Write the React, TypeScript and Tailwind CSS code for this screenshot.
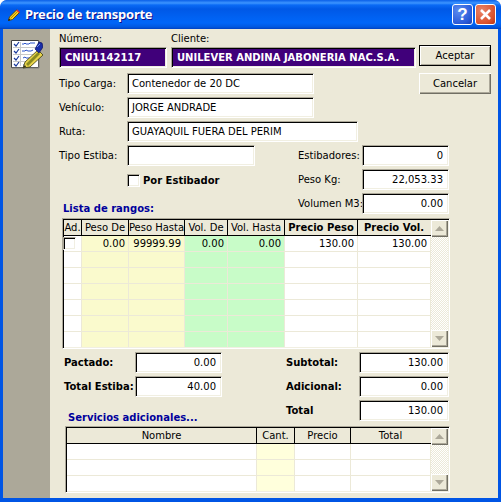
import { ReactNode } from "react";

const sunken = "border border-t-[#aca899] border-l-[#aca899] border-r-white border-b-white shadow-[inset_1px_1px_0_#000,inset_-1px_-1px_0_#f1efe2]";
const raised = "bg-[#ece9d8] shadow-[inset_1px_1px_0_#fff,inset_-1px_-1px_0_#716f64,inset_-2px_-2px_0_#aca899]";

interface Col { title: string; width: string; bg: string; bold?: boolean }

const RANGE_COLS: Col[] = [
  { title: "Ad.", width: "w-[18px]", bg: "bg-white" },
  { title: "Peso De", width: "w-[47px]", bg: "bg-[#fafacd]" },
  { title: "Peso Hasta", width: "w-[56px]", bg: "bg-[#fafacd]" },
  { title: "Vol. De", width: "w-[43px]", bg: "bg-[#c8fcc8]" },
  { title: "Vol. Hasta", width: "w-[57px]", bg: "bg-[#c8fcc8]" },
  { title: "Precio Peso", width: "w-[73px]", bg: "bg-white", bold: true },
  { title: "Precio Vol.", width: "w-[73px]", bg: "bg-white", bold: true },
];

const SERVICE_COLS: Col[] = [
  { title: "Nombre", width: "w-[190px]", bg: "bg-white" },
  { title: "Cant.", width: "w-[38px]", bg: "bg-[#ffffdc]" },
  { title: "Precio", width: "w-[56px]", bg: "bg-white" },
  { title: "Total", width: "w-[80px]", bg: "bg-white" },
];

function Arrow({ down }: { down?: boolean }) {
  return (
    <svg width="9" height="5" viewBox="0 0 9 5">
      <path d={down ? "M0 0h9L4.5 5z" : "M4.5 0L9 5H0z"} fill="#aca899" />
    </svg>
  );
}

function ScrollBar() {
  return (
    <div className="flex flex-col w-[17px] h-full">
      <div className={`${raised} h-[17px] shrink-0 flex items-center justify-center`}><Arrow /></div>
      <div className="flex-1 bg-[repeating-conic-gradient(#ece9d8_0_25%,#fff_0_50%)] bg-[length:2px_2px]" />
      <div className={`${raised} h-[17px] shrink-0 flex items-center justify-center`}><Arrow down /></div>
    </div>
  );
}

function Check({ className = "" }: { className?: string }) {
  return <div className={`w-[13px] h-[13px] bg-white ${sunken} ${className}`} />;
}

function Input({ value = "", width, right }: { value?: string; width: string; right?: boolean }) {
  return (
    <div className={`${width} h-[21px] ${sunken} bg-white flex items-center whitespace-nowrap overflow-hidden ${right ? "justify-end pr-[5px]" : "pl-[4px]"}`}>
      {value}
    </div>
  );
}

function Field({ label, labelWidth, children, bold }: { label: string; labelWidth: string; children: ReactNode; bold?: boolean }) {
  return (
    <div className="flex items-center h-[21px]">
      <div className={`${labelWidth} shrink-0 whitespace-nowrap ${bold ? "font-bold" : ""}`}>{label}</div>
      {children}
    </div>
  );
}

function Grid({ cols, rows, className }: { cols: Col[]; rows: (ReactNode | string)[][]; className: string }) {
  return (
    <div className={`${sunken} p-[1px] flex ${className}`}>
      <div className="flex flex-col">
        <div className="flex h-[16px] bg-[#ece9d8] border-b border-black shrink-0">
          {cols.map((c, i) => (
            <div key={c.title} className={`${c.width} h-full flex items-center justify-center whitespace-nowrap overflow-hidden ${c.bold ? "font-bold" : ""} ${i < cols.length - 1 ? "border-r border-black" : "border-r border-[#ece9d8]"}`}>
              {c.title}
            </div>
          ))}
        </div>
        {rows.map((r, ri) => (
          <div key={ri} className={`flex ${ri === rows.length - 1 ? "h-[15px]" : "h-[16px] border-b border-[#ece9d8]"}`}>
            {cols.map((c, ci) => (
              <div key={c.title} className={`${c.width} ${c.bg} border-r border-[#ece9d8] h-full flex items-center justify-end pr-[3px] whitespace-nowrap`}>
                {r[ci]}
              </div>
            ))}
          </div>
        ))}
      </div>
      <ScrollBar />
    </div>
  );
}

function DocIcon() {
  return (
    <svg width="32" height="32" viewBox="0 0 32 32">
      <path d="M.5 2.5h27v27H.5z" fill="#fff" stroke="#404040" />
      <path d="M28 3v27H1" fill="none" stroke="#808080" />
      <path d="M2 9.500h24M2 16.500h24M2 23.500h16M9.500 4v24" stroke="#c8c8c8" fill="none" />
      <path d="M3 6l2 2 3-4M3 13l2 2 3-4M3 20l2 2 3-4M3 26l2 2 3-4" stroke="#1a3a9c" fill="none" strokeWidth="1.200" />
      <path d="M11 6h2l1-1 1 1h3l1-1h5M11 13h3l1-1 2 1h3l2-1M12 20l2-1 1 1h4M12 27h3" stroke="#2a52c8" fill="none" />
      <path d="M12 30l2-6 13-12 5 5-13 12z" fill="#e8d44a" stroke="#3a3a10" strokeWidth=".8" />
      <path d="M15 26l12-12 2 2-12 12z" fill="#8a8a20" />
      <path d="M24 11l4-7 3 1 1 4-4 6z" fill="#1a2ea8" stroke="#0a1060" strokeWidth=".7" />
      <path d="M26 9l3-3" stroke="#6f8cf0" fill="none" />
      <path d="M12 30l2-3 1 2z" fill="#202020" />
    </svg>
  );
}

function PencilIcon() {
  return (
    <svg width="12" height="12" viewBox="0 0 12 12" className="shrink-0">
      <path d="M.5 11.500l1-3.500L8.500 1l3 2.500-7 7z" fill="#f5d020" stroke="#5a4200" strokeWidth=".9" />
      <path d="M2.500 9.500L9 3" stroke="#c08a00" fill="none" />
      <path d="M8 1.500l3 2.500 .8-1L9.500.5z" fill="#e83030" />
      <path d="M.3 11.700l.6-2 1.400 1.400z" fill="#000" />
    </svg>
  );
}

export default function App() {
  const empty = ["", "", "", "", "", "", ""];
  const rangeRows: (ReactNode | string)[][] = [
    [<Check key="c" className="-ml-[1px] mr-[2px]" />, "0.00", "99999.99", "0.00", "0.00", "130.00", "130.00"],
    empty, empty, empty, empty, empty, empty,
  ];

  return (
    <div className="w-[501px] h-[502px] flex flex-col overflow-hidden font-['DejaVu_Sans',sans-serif] text-[10px] text-black bg-[#0055e5] rounded-t-[7px]">
      {/* Title bar */}
      <div className="h-[29px] shrink-0 flex items-center pl-[8px] pr-[5px] rounded-t-[7px] bg-[linear-gradient(#0a5fe8_0,#3d95ff_3px,#0a6af5_5px,#0058e6_9px,#0062f3_18px,#0066f8_23px,#0058e0_27px,#0040c0_29px)]">
        <PencilIcon />
        <span className="ml-[5px] font-['Noto_Sans',sans-serif] font-bold text-[13px] tracking-[-0.25px] text-white [text-shadow:1px_1px_#0f1089] whitespace-nowrap">Precio de transporte</span>
        <div className="ml-auto flex gap-[2px]">
          <div className="w-[21px] h-[21px] rounded-[3px] border border-white bg-[radial-gradient(circle_at_30%_30%,#5c8cf0,#2a5ad8_70%,#1c3fb0)] flex items-center justify-center font-['Liberation_Sans',sans-serif] font-bold text-[17px] text-white">?</div>
          <div className="w-[21px] h-[21px] rounded-[3px] border border-white bg-[radial-gradient(circle_at_30%_30%,#ea8468,#d9512c_70%,#b8330f)] flex items-center justify-center">
            <svg width="13" height="13" viewBox="0 0 13 13"><path d="M2 2l9 9M11 2l-9 9" stroke="#fff" strokeWidth="2.600" /></svg>
          </div>
        </div>
      </div>

      {/* Window body */}
      <div className="flex-1 flex mx-[3px] mb-[4px] min-h-0">
        <div className="w-[47px] shrink-0 bg-[#aca899] pl-[8px] pt-[9px]">
          <DocIcon />
        </div>
        <div className="flex-1 bg-[#ece9d8] min-w-0">
          {/* Top block */}
          <div className="flex pl-[9px] pt-[3px]">
            <div className="w-[357px]">
              <div className="flex gap-[4px]">
                <div>
                  <div className="h-[15px] leading-[13px]">Número:</div>
                  <div className={`w-[108px] h-[21px] ${sunken} bg-[#40007a] text-white font-bold flex items-center pl-[5px] whitespace-nowrap`}>CNIU1142117</div>
                </div>
                <div>
                  <div className="h-[15px] leading-[13px]">Cliente:</div>
                  <div className={`w-[245px] h-[21px] ${sunken} bg-[#40007a] text-white font-bold flex items-center pl-[5px] whitespace-nowrap`}>UNILEVER ANDINA JABONERIA NAC.S.A.</div>
                </div>
              </div>
              <div className="flex flex-col gap-[3px] mt-[5px]">
                <Field label="Tipo Carga:" labelWidth="w-[68px]"><Input width="w-[187px]" value="Contenedor de 20 DC" /></Field>
                <Field label="Vehículo:" labelWidth="w-[68px]"><Input width="w-[187px]" value="JORGE ANDRADE" /></Field>
                <Field label="Ruta:" labelWidth="w-[68px]"><Input width="w-[231px]" value="GUAYAQUIL FUERA DEL PERIM" /></Field>
              </div>
            </div>
            <div className="flex flex-col gap-[7px] pt-[13px] ml-[3px]">
              <div className="w-[72px] h-[21px] border border-black bg-[#ece9d8] shadow-[inset_1px_1px_0_#fff,inset_-1px_-1px_0_#aca899] flex items-center justify-center">Aceptar</div>
              <div className={`w-[72px] h-[21px] ${raised} flex items-center justify-center`}>Cancelar</div>
            </div>
          </div>

          {/* Stowage block */}
          <div className="flex pl-[9px] mt-[3px]">
            <div className="w-[239px]">
              <Field label="Tipo Estiba:" labelWidth="w-[68px]"><Input width="w-[128px]" /></Field>
              <div className="flex items-center gap-[3px] pl-[68px] mt-[8px] h-[13px] font-bold">
                <Check />
                <span className="whitespace-nowrap">Por Estibador</span>
              </div>
              <div className="mt-[15px] ml-[4px] h-[13px] leading-[13px] font-bold text-[#00009c]">Lista de rangos:</div>
            </div>
            <div className="flex flex-col gap-[3px]">
              <Field label="Estibadores:" labelWidth="w-[64px]"><Input width="w-[87px]" right value="0" /></Field>
              <Field label="Peso Kg:" labelWidth="w-[64px]"><Input width="w-[87px]" right value="22,053.33" /></Field>
              <Field label="Volumen M3:" labelWidth="w-[64px]"><Input width="w-[87px]" right value="0.00" /></Field>
            </div>
          </div>

          {/* Ranges grid */}
          <Grid className="ml-[12px] mt-[3px] w-[388px] h-[131px]" cols={RANGE_COLS} rows={rangeRows} />

          {/* Totals block */}
          <div className="flex mt-[3px]">
            <div className="w-[236px] pl-[14px]">
              <div className="flex flex-col gap-[3px]">
                <Field bold label="Pactado:" labelWidth="w-[71px]"><Input width="w-[87px]" right value="0.00" /></Field>
                <Field bold label="Total Estiba:" labelWidth="w-[71px]"><Input width="w-[87px]" right value="40.00" /></Field>
              </div>
              <div className="mt-[14px] ml-[4px] h-[14px] leading-[14px] font-bold text-[#00009c] whitespace-nowrap">Servicios adicionales...</div>
            </div>
            <div className="flex flex-col gap-[3px]">
              <Field bold label="Subtotal:" labelWidth="w-[73px]"><Input width="w-[90px]" right value="130.00" /></Field>
              <Field bold label="Adicional:" labelWidth="w-[73px]"><Input width="w-[90px]" right value="0.00" /></Field>
              <Field bold label="Total" labelWidth="w-[73px]"><Input width="w-[90px]" right value="130.00" /></Field>
            </div>
          </div>

          {/* Services grid */}
          <Grid className="ml-[15px] mt-[1px] w-[385px] h-[67px]" cols={SERVICE_COLS} rows={[["", "", "", ""], ["", "", "", ""], ["", "", "", ""]]} />
        </div>
      </div>
    </div>
  );
}
